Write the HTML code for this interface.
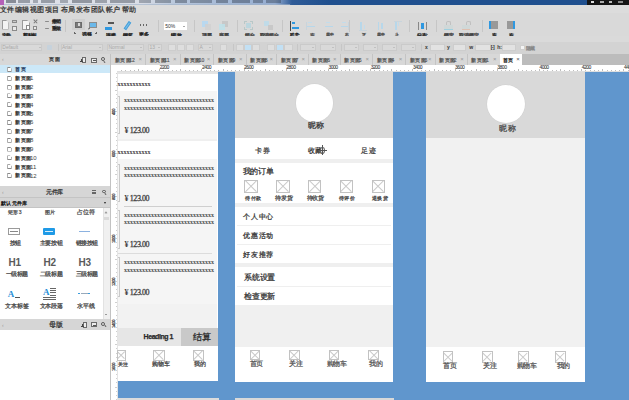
<!DOCTYPE html>
<html><head><meta charset="utf-8">
<title>Axure RP 9 - 原型设计</title>
<style>
*{margin:0;padding:0;box-sizing:border-box}
html,body{width:629px;height:400px;overflow:hidden;background:#d9d9d9;font-family:"Liberation Sans",sans-serif;color:#333}
.a{position:absolute}
.t{position:absolute;white-space:nowrap;line-height:1}
.cj{-webkit-text-stroke:0.25px currentColor}
.ph{position:absolute;border:0.8px solid #c2c2c2;background:#fff;overflow:hidden}
.ph:before,.ph:after{content:"";position:absolute;left:50%;top:50%;width:141%;height:0.7px;background:#cacaca;transform:translate(-50%,-50%) rotate(45deg)}
.ph:after{transform:translate(-50%,-50%) rotate(-45deg)}
</style></head><body>

<div class="a" style="left:0px;top:0px;width:629px;height:4.5px;background:linear-gradient(90deg,#dfe2e9 0,#d9dde6 140px,#b8c7dc 175px,#a3b8d6 230px,#94acd0 275px,#2f5b97 292px,#1f4f8e 330px,#1f4f8e 100%)"></div>
<div class="a" style="left:0px;top:3.6px;width:290px;height:0.9px;background:#9fb0c8;opacity:.6"></div>
<div class="a" style="left:0px;top:0px;width:3.5px;height:4.5px;background:#b560b8"></div>
<div class="a" style="left:6px;top:0.4px;width:10px;height:2.8px;background:#1c2432;opacity:0.45"></div>
<div class="a" style="left:18px;top:0.4px;width:12px;height:2.8px;background:#1c2432;opacity:0.36"></div>
<div class="a" style="left:33px;top:0.4px;width:5px;height:2.8px;background:#1c2432;opacity:0.30"></div>
<div class="a" style="left:41px;top:0.4px;width:14px;height:2.8px;background:#1c2432;opacity:0.36"></div>
<div class="a" style="left:60px;top:0.4px;width:8px;height:2.8px;background:#1c2432;opacity:0.30"></div>
<div class="a" style="left:72px;top:0.4px;width:20px;height:2.8px;background:#1c2432;opacity:0.39"></div>
<div class="a" style="left:95px;top:0.4px;width:12px;height:2.8px;background:#1c2432;opacity:0.33"></div>
<div class="a" style="left:110px;top:0.4px;width:25px;height:2.8px;background:#1c2432;opacity:0.36"></div>
<div class="a" style="left:139px;top:0.4px;width:12px;height:2.8px;background:#1c2432;opacity:0.30"></div>
<div class="a" style="left:155px;top:0.4px;width:16px;height:2.8px;background:#1c2432;opacity:0.33"></div>
<div class="a" style="left:175px;top:0.4px;width:12px;height:2.8px;background:#1c2432;opacity:0.36"></div>
<div class="a" style="left:190px;top:0.4px;width:22px;height:2.8px;background:#1c2432;opacity:0.33"></div>
<div class="a" style="left:216px;top:0.4px;width:12px;height:2.8px;background:#1c2432;opacity:0.36"></div>
<div class="a" style="left:232px;top:0.4px;width:18px;height:2.8px;background:#1c2432;opacity:0.36"></div>
<div class="a" style="left:253px;top:0.4px;width:10px;height:2.8px;background:#1c2432;opacity:0.33"></div>
<div class="a" style="left:266px;top:0.4px;width:15px;height:2.8px;background:#1c2432;opacity:0.33"></div>
<div class="a" style="left:587px;top:0px;width:42px;height:4.5px;background:#151515"></div>
<div class="a" style="left:591px;top:1px;width:3px;height:2px;background:#ddd"></div>
<div class="a" style="left:600px;top:1px;width:4px;height:2px;background:#aaa"></div>
<div class="a" style="left:609px;top:1px;width:3px;height:2px;background:#bbb"></div>
<div class="a" style="left:618px;top:1px;width:5px;height:2px;background:#888"></div>
<div class="a" style="left:0px;top:4.5px;width:629px;height:8.5px;background:#dcdcdc"></div>
<div class="t cj" style="left:0px;top:5.7px;font-size:7px;letter-spacing:-0.15px;color:#333;">文件</div>
<div class="t cj" style="left:15px;top:5.7px;font-size:7px;letter-spacing:0.2px;color:#333;">编辑</div>
<div class="t cj" style="left:30px;top:5.7px;font-size:7px;letter-spacing:0.35px;color:#333;">视图</div>
<div class="t cj" style="left:45px;top:5.7px;font-size:7px;letter-spacing:0.25px;color:#333;">项目</div>
<div class="t cj" style="left:60.5px;top:5.7px;font-size:7px;letter-spacing:0.1px;color:#333;">布局</div>
<div class="t cj" style="left:75.8px;top:5.7px;font-size:7px;letter-spacing:0.1px;color:#333;">发布</div>
<div class="t cj" style="left:90.6px;top:5.7px;font-size:7px;letter-spacing:0.2px;color:#333;">团队</div>
<div class="t cj" style="left:106px;top:5.7px;font-size:7px;letter-spacing:0.25px;color:#333;">帐户</div>
<div class="t cj" style="left:121.6px;top:5.7px;font-size:7px;letter-spacing:0.1px;color:#333;">帮助</div>
<div class="a" style="left:0px;top:13px;width:629px;height:27px;background:#d9d9d9"></div>
<div class="a" style="left:65.3px;top:20px;width:0.8px;height:12px;background:#c6c6c6"></div>
<div class="a" style="left:158.3px;top:20px;width:0.8px;height:12px;background:#c6c6c6"></div>
<div class="a" style="left:193.9px;top:20px;width:0.8px;height:12px;background:#c6c6c6"></div>
<div class="a" style="left:237px;top:20px;width:0.8px;height:12px;background:#c6c6c6"></div>
<div class="a" style="left:281.5px;top:20px;width:0.8px;height:12px;background:#c6c6c6"></div>
<div class="a" style="left:349px;top:20px;width:0.8px;height:12px;background:#c6c6c6"></div>
<div class="a" style="left:409.4px;top:20px;width:0.8px;height:12px;background:#c6c6c6"></div>
<div class="a" style="left:435.9px;top:20px;width:0.8px;height:12px;background:#c6c6c6"></div>
<div class="a" style="left:481.5px;top:20px;width:0.8px;height:12px;background:#c6c6c6"></div>
<div class="a" style="left:1.8px;top:20px;width:6.8px;height:9.5px;border:1px solid #9a9a9a;background:#f4f4f4;clip-path:polygon(0 0,65% 0,100% 30%,100% 100%,0 100%)"></div>
<div class="a" style="left:11.5px;top:19.6px;width:5px;height:3.5px;border:1px solid #8a8a8a;background:#c8c8c8"></div>
<div class="a" style="left:11.5px;top:26px;width:5.5px;height:4.5px;border:1px solid #8a8a8a;background:#e8e8e8"></div>
<div class="a" style="left:1.6px;top:32.7px;width:7.4px;height:3.6px;background:#1a1a1a;opacity:.28"></div>
<div class="t cj" style="left:1.6px;top:32.5px;font-size:5px;letter-spacing:-0.3px;color:#1a1a1a;">文件</div>
<div class="a" style="left:22px;top:20px;width:8px;height:10px;border:1px solid #9a9a9a;background:#f4f4f4;clip-path:polygon(0 0,65% 0,100% 30%,100% 100%,0 100%)"></div>
<div class="a" style="left:26px;top:25px;width:4px;height:5px;border:1px solid #8a8a8a;background:#fff"></div>
<div class="a" style="left:33px;top:21.2px;width:5px;height:0.9px;background:#777;transform:rotate(45deg)"></div>
<div class="a" style="left:33px;top:21.2px;width:5px;height:0.9px;background:#777;transform:rotate(-45deg)"></div>
<div class="a" style="left:32.6px;top:25.6px;width:4.8px;height:4.9px;border:1px solid #8a8a8a;background:#e8e8e8"></div>
<div class="a" style="left:23px;top:32.7px;width:11px;height:3.6px;background:#1a1a1a;opacity:.28"></div>
<div class="t cj" style="left:23px;top:32.5px;font-size:5px;letter-spacing:-0.33px;color:#1a1a1a;">剪贴板</div>
<div class="a" style="left:44.8px;top:20.5px;width:4.2px;height:1.3px;background:#8a8a8a;border-radius:1px"></div>
<div class="a" style="left:44.8px;top:27.7px;width:4.2px;height:1.3px;background:#8a8a8a;border-radius:1px"></div>
<div class="a" style="left:51.5px;top:19.5px;width:7.5px;height:3.5px;background:#222;opacity:.28"></div>
<div class="t cj" style="left:51.5px;top:19.25px;font-size:5px;letter-spacing:-0.25px;color:#222;">撤销</div>
<div class="a" style="left:51.5px;top:26.5px;width:7.5px;height:3.5px;background:#222;opacity:.28"></div>
<div class="t cj" style="left:51.5px;top:26.25px;font-size:5px;letter-spacing:-0.25px;color:#222;">重做</div>
<div class="a" style="left:72px;top:19.2px;width:13px;height:10.5px;background:#cfcfcf"></div>
<div class="a" style="left:75px;top:21.6px;width:7px;height:6.3px;background:#7a7a7a;border:1px solid #6a6a6a"></div>
<div class="a" style="left:77.6px;top:22.8px;width:2px;height:3.6px;background:#d8d8d8"></div>
<div class="a" style="left:89px;top:21.6px;width:7.8px;height:6.8px;border:1px solid #8c8c8c;background:#6ab8ea"></div>
<div class="a" style="left:88.2px;top:27.6px;width:2.2px;height:0.9px;background:#555;transform:rotate(-45deg)"></div>
<div class="a" style="left:73.5px;top:32px;width:2.5px;height:2px;border-left:1px solid #666;border-bottom:1px solid #666"></div>
<div class="a" style="left:94.5px;top:32px;width:2.5px;height:2px;border-right:1px solid #666;border-bottom:1px solid #666"></div>
<div class="a" style="left:82px;top:31.8px;width:7px;height:3.7px;background:#1a1a1a;opacity:.28"></div>
<div class="t cj" style="left:82px;top:31.65px;font-size:5px;letter-spacing:-0.5px;color:#1a1a1a;">选择</div>
<div class="a" style="left:108px;top:21.6px;width:6px;height:2px;background:#555"></div>
<div class="a" style="left:105px;top:27.2px;width:6.5px;height:2.8px;background:#2f98e0"></div>
<div class="a" style="left:106px;top:32.7px;width:7.5px;height:3.6px;background:#1a1a1a;opacity:.28"></div>
<div class="t cj" style="left:106px;top:32.5px;font-size:5px;letter-spacing:-0.25px;color:#1a1a1a;">连接</div>
<div class="a" style="left:125.5px;top:21px;width:2.6px;height:9px;background:#7cc3ec;transform:rotate(35deg);border:0.5px solid #4a9fd8"></div>
<div class="a" style="left:123px;top:32.7px;width:8px;height:3.6px;background:#1a1a1a;opacity:.28"></div>
<div class="t cj" style="left:123px;top:32.5px;font-size:5px;letter-spacing:0px;color:#1a1a1a;">钢笔</div>
<div class="a" style="left:139.5px;top:24.3px;width:1.8px;height:1.6px;background:#666"></div>
<div class="a" style="left:142.6px;top:24.3px;width:1.8px;height:1.6px;background:#666"></div>
<div class="a" style="left:145.7px;top:24.3px;width:1.8px;height:1.6px;background:#666"></div>
<div class="a" style="left:139px;top:32.5px;width:7px;height:3.7px;background:#1a1a1a;opacity:.28"></div>
<div class="t cj" style="left:139px;top:32.35px;font-size:5px;letter-spacing:-0.5px;color:#1a1a1a;">更多</div>
<div class="a" style="left:146.8px;top:34.2px;width:0;height:0;border-left:1.1px solid transparent;border-right:1.1px solid transparent;border-top:1.5px solid #333"></div>
<div class="a" style="left:164px;top:21.9px;width:23px;height:8.4px;background:#fff"></div>
<div class="t" style="left:165.2px;top:24.2px;font-size:5px;color:#333;">50%</div>
<div class="a" style="left:183.2px;top:25.6px;width:0;height:0;border-left:1.2px solid transparent;border-right:1.2px solid transparent;border-top:1.5px solid #555"></div>
<div class="a" style="left:171px;top:33px;width:9px;height:3.5px;background:#1a1a1a;opacity:.28"></div>
<div class="t cj" style="left:171px;top:32.75px;font-size:5px;letter-spacing:0.5px;color:#1a1a1a;">缩放</div>
<div class="a" style="left:202px;top:21px;width:6px;height:5.5px;background:#b9d8ef"></div>
<div class="a" style="left:205px;top:24px;width:6px;height:5.5px;background:#d0d0d0;opacity:.9"></div>
<div class="a" style="left:202px;top:32.7px;width:8px;height:3.6px;background:#3a3a3a;opacity:.28"></div>
<div class="t cj" style="left:202px;top:32.5px;font-size:5px;letter-spacing:0px;color:#3a3a3a;">顶层</div>
<div class="a" style="left:222px;top:21px;width:6px;height:5.5px;background:#c8c8c8"></div>
<div class="a" style="left:219px;top:24px;width:6px;height:5.5px;background:#bfe0e8;opacity:.9"></div>
<div class="a" style="left:219px;top:32.7px;width:8px;height:3.6px;background:#3a3a3a;opacity:.28"></div>
<div class="t cj" style="left:219px;top:32.5px;font-size:5px;letter-spacing:0px;color:#3a3a3a;">底层</div>
<div class="a" style="left:244px;top:20.5px;width:9px;height:9px;border:1px dashed #b8c8c8"></div>
<div class="a" style="left:246px;top:22.5px;width:5px;height:5px;background:#bcd6de"></div>
<div class="a" style="left:245px;top:32.7px;width:7px;height:3.6px;background:#3a3a3a;opacity:.28"></div>
<div class="t cj" style="left:245px;top:32.5px;font-size:5px;letter-spacing:-0.5px;color:#3a3a3a;">组合</div>
<div class="a" style="left:264px;top:21px;width:5px;height:5px;background:#c0dbe8"></div>
<div class="a" style="left:268px;top:24.5px;width:5px;height:5px;background:#c8c8c8"></div>
<div class="a" style="left:259.5px;top:32.7px;width:15.5px;height:3.6px;background:#3a3a3a;opacity:.28"></div>
<div class="t cj" style="left:259.5px;top:32.5px;font-size:5px;letter-spacing:-0.12px;color:#3a3a3a;">取消组合</div>
<div class="a" style="left:290px;top:21px;width:0.9px;height:10px;background:#444"></div>
<div class="a" style="left:292.2px;top:22px;width:2.8px;height:1.8px;background:#2f98e0"></div>
<div class="a" style="left:292.2px;top:26.5px;width:6.5px;height:2px;background:#2f98e0"></div>
<div class="a" style="left:290px;top:33px;width:7px;height:3.3px;background:#1a1a1a;opacity:.28"></div>
<div class="t cj" style="left:290px;top:33.15px;font-size:4px;letter-spacing:0.5px;color:#1a1a1a;">对齐</div>
<div class="a" style="left:297.6px;top:34.3px;width:0;height:0;border-left:1.1px solid transparent;border-right:1.1px solid transparent;border-top:1.5px solid #333"></div>
<div class="a" style="left:307px;top:25.5px;width:8px;height:1.8px;background:#b7d7ea"></div>
<div class="a" style="left:308px;top:22px;width:4px;height:1.2px;background:#c2dceb"></div>
<div class="a" style="left:325px;top:25.5px;width:8px;height:1.8px;background:#b7d7ea"></div>
<div class="a" style="left:326px;top:22px;width:4px;height:1.2px;background:#c2dceb"></div>
<div class="a" style="left:341px;top:25.5px;width:8px;height:1.8px;background:#b7d7ea"></div>
<div class="a" style="left:342px;top:22px;width:4px;height:1.2px;background:#c2dceb"></div>
<div class="a" style="left:305.5px;top:21.5px;width:0.7px;height:8px;background:#c8d4dc"></div>
<div class="a" style="left:348.2px;top:21.5px;width:0.7px;height:8px;background:#c8d4dc"></div>
<div class="a" style="left:360px;top:21.5px;width:1.8px;height:8px;background:#b7d7ea"></div>
<div class="a" style="left:363.5px;top:25px;width:1.2px;height:4px;background:#c2dceb"></div>
<div class="a" style="left:358.5px;top:29.6px;width:8px;height:0.7px;background:#c8d4dc"></div>
<div class="a" style="left:377.5px;top:21.5px;width:1.8px;height:8px;background:#b7d7ea"></div>
<div class="a" style="left:381px;top:22.5px;width:1.8px;height:6px;background:#b7d7ea"></div>
<div class="a" style="left:395px;top:21.5px;width:1.8px;height:8px;background:#b7d7ea"></div>
<div class="a" style="left:398.2px;top:21.5px;width:1.2px;height:4px;background:#c2dceb"></div>
<div class="a" style="left:393.5px;top:21px;width:8px;height:0.7px;background:#c8d4dc"></div>
<div class="a" style="left:310px;top:33px;width:4px;height:3.3px;background:#4a4a4a;opacity:.28"></div>
<div class="t cj" style="left:310px;top:32.65px;font-size:5px;letter-spacing:0px;color:#4a4a4a;">左</div>
<div class="a" style="left:326px;top:33px;width:6px;height:3.3px;background:#4a4a4a;opacity:.28"></div>
<div class="t cj" style="left:326px;top:33.15px;font-size:4px;letter-spacing:0px;color:#4a4a4a;">居中</div>
<div class="a" style="left:344.5px;top:33px;width:3.5px;height:3.3px;background:#4a4a4a;opacity:.28"></div>
<div class="t cj" style="left:344.5px;top:33.15px;font-size:4px;letter-spacing:0.5px;color:#4a4a4a;">右</div>
<div class="a" style="left:361.5px;top:33px;width:3.5px;height:3.3px;background:#4a4a4a;opacity:.28"></div>
<div class="t cj" style="left:361.5px;top:33.15px;font-size:4px;letter-spacing:0.5px;color:#4a4a4a;">下</div>
<div class="a" style="left:376.5px;top:33px;width:7px;height:3.3px;background:#4a4a4a;opacity:.28"></div>
<div class="t cj" style="left:376.5px;top:33.15px;font-size:4px;letter-spacing:0.5px;color:#4a4a4a;">居中</div>
<div class="a" style="left:394.5px;top:33px;width:3.5px;height:3.3px;background:#4a4a4a;opacity:.28"></div>
<div class="t cj" style="left:394.5px;top:33.15px;font-size:4px;letter-spacing:0.5px;color:#4a4a4a;">上</div>
<div class="a" style="left:418px;top:21.6px;width:1px;height:8px;background:#888"></div>
<div class="a" style="left:426px;top:21.6px;width:1px;height:8px;background:#888"></div>
<div class="a" style="left:420.5px;top:22.5px;width:3px;height:6.5px;background:#2f98e0"></div>
<div class="a" style="left:417px;top:33px;width:8px;height:3.3px;background:#1a1a1a;opacity:.28"></div>
<div class="t cj" style="left:417px;top:32.65px;font-size:5px;letter-spacing:0px;color:#1a1a1a;">分布</div>
<div class="a" style="left:425.6px;top:34.3px;width:0;height:0;border-left:1.1px solid transparent;border-right:1.1px solid transparent;border-top:1.5px solid #333"></div>
<div class="a" style="left:445.5px;top:21px;width:5px;height:4px;border:1px solid #c0c0c0;border-bottom:none;border-radius:2px 2px 0 0"></div>
<div class="a" style="left:444px;top:25px;width:8.5px;height:4.5px;background:#d0d8d8;border-bottom:1px solid #9fd0e0"></div>
<div class="a" style="left:444px;top:32.7px;width:8px;height:3.6px;background:#3a3a3a;opacity:.28"></div>
<div class="t cj" style="left:444px;top:32.5px;font-size:5px;letter-spacing:0px;color:#3a3a3a;">锁定</div>
<div class="a" style="left:466px;top:20.5px;width:4.5px;height:4px;border:1px solid #c0c0c0;border-bottom:none;border-radius:2px 2px 0 0"></div>
<div class="a" style="left:462px;top:25px;width:8px;height:4.5px;background:#d0d8d8;border-bottom:1px solid #e0c0b0"></div>
<div class="a" style="left:458.5px;top:32.7px;width:16px;height:3.6px;background:#3a3a3a;opacity:.28"></div>
<div class="t cj" style="left:458.5px;top:32.5px;font-size:5px;letter-spacing:0px;color:#3a3a3a;">取消锁定</div>
<div class="a" style="left:489px;top:21.2px;width:9px;height:8.1px;background:#999;border-left:2px solid #2f98e0"></div>
<div class="a" style="left:506.5px;top:21.2px;width:8.5px;height:8.1px;background:#999;border-right:2px solid #2f98e0"></div>
<div class="a" style="left:491.5px;top:32.7px;width:4px;height:3.6px;background:#1a1a1a;opacity:.28"></div>
<div class="t cj" style="left:491.5px;top:32.5px;font-size:5px;letter-spacing:0px;color:#1a1a1a;">左</div>
<div class="a" style="left:508.5px;top:32.7px;width:4px;height:3.6px;background:#1a1a1a;opacity:.28"></div>
<div class="t cj" style="left:508.5px;top:32.5px;font-size:5px;letter-spacing:0px;color:#1a1a1a;">右</div>
<div class="a" style="left:0px;top:36px;width:629px;height:6px;background:#dadada"></div>
<div class="a" style="left:0px;top:42px;width:629px;height:12.5px;background:#d3d3d3"></div>
<div class="a" style="left:0.8px;top:43.8px;width:41.7px;height:7.5px;background:#d9d9d9;border:0.8px solid #cacaca"></div>
<div class="t" style="left:2.3px;top:45.3px;font-size:5px;color:#a8a8a8;">Default</div>
<div class="a" style="left:38.5px;top:47px;width:0;height:0;border-left:1.2px solid transparent;border-right:1.2px solid transparent;border-top:1.5px solid #a8a8a8"></div>
<div class="a" style="left:46.5px;top:44.5px;width:5.5px;height:5.5px;background:#c6d2dc;border-radius:1px"></div>
<div class="a" style="left:57.5px;top:44px;width:0.7px;height:7px;background:#c6c6c6"></div>
<div class="a" style="left:60.5px;top:43.8px;width:42.5px;height:7.5px;background:#d9d9d9;border:0.8px solid #cacaca"></div>
<div class="t" style="left:62px;top:45.3px;font-size:5px;color:#a8a8a8;">Arial</div>
<div class="a" style="left:99px;top:47px;width:0;height:0;border-left:1.2px solid transparent;border-right:1.2px solid transparent;border-top:1.5px solid #a8a8a8"></div>
<div class="a" style="left:107px;top:43.8px;width:37px;height:7.5px;background:#d9d9d9;border:0.8px solid #cacaca"></div>
<div class="t" style="left:108.5px;top:45.3px;font-size:5px;color:#a8a8a8;">Normal</div>
<div class="a" style="left:140px;top:47px;width:0;height:0;border-left:1.2px solid transparent;border-right:1.2px solid transparent;border-top:1.5px solid #a8a8a8"></div>
<div class="a" style="left:148px;top:43.8px;width:14px;height:7.5px;background:#d9d9d9;border:0.8px solid #cacaca"></div>
<div class="t" style="left:149.5px;top:45.3px;font-size:5px;color:#a8a8a8;">13</div>
<div class="a" style="left:158px;top:47px;width:0;height:0;border-left:1.2px solid transparent;border-right:1.2px solid transparent;border-top:1.5px solid #a8a8a8"></div>
<div class="a" style="left:167.6px;top:43.6px;width:8.8px;height:7.8px;background:#dedede;border:0.8px solid #cdcdcd"></div>
<div class="a" style="left:176.6px;top:43.6px;width:8.8px;height:7.8px;background:#dedede;border:0.8px solid #cdcdcd"></div>
<div class="a" style="left:185.6px;top:43.6px;width:8.8px;height:7.8px;background:#dedede;border:0.8px solid #cdcdcd"></div>
<div class="a" style="left:198px;top:43.8px;width:15px;height:7.5px;background:#d9d9d9;border:0.8px solid #cacaca"></div>
<div class="t" style="left:199.5px;top:45.3px;font-size:5px;color:#a8a8a8;">A</div>
<div class="a" style="left:209px;top:47px;width:0;height:0;border-left:1.2px solid transparent;border-right:1.2px solid transparent;border-top:1.5px solid #a8a8a8"></div>
<div class="a" style="left:220px;top:43.6px;width:7px;height:7.8px;background:#dedede;border:0.8px solid #cdcdcd"></div>
<div class="a" style="left:233px;top:44px;width:0.7px;height:7px;background:#c6c6c6"></div>
<div class="a" style="left:236px;top:43.6px;width:8.4px;height:7.8px;background:#dedede;border:0.8px solid #cdcdcd"></div>
<div class="a" style="left:244px;top:43.6px;width:8.4px;height:7.8px;background:#c2e0f4;border:0.8px solid #cdcdcd"></div>
<div class="a" style="left:252px;top:43.6px;width:8.4px;height:7.8px;background:#dedede;border:0.8px solid #cdcdcd"></div>
<div class="a" style="left:266.5px;top:43.6px;width:8.6px;height:7.8px;background:#dedede;border:0.8px solid #cdcdcd"></div>
<div class="a" style="left:275.7px;top:43.6px;width:8.6px;height:7.8px;background:#c2e0f4;border:0.8px solid #cdcdcd"></div>
<div class="a" style="left:284.3px;top:43.6px;width:8.6px;height:7.8px;background:#dedede;border:0.8px solid #cdcdcd"></div>
<div class="a" style="left:296.7px;top:44px;width:0.7px;height:7px;background:#c6c6c6"></div>
<div class="a" style="left:300px;top:43.8px;width:16px;height:7.5px;background:#d9d9d9;border:0.8px solid #cacaca"></div>
<div class="a" style="left:312px;top:47px;width:0;height:0;border-left:1.2px solid transparent;border-right:1.2px solid transparent;border-top:1.5px solid #a8a8a8"></div>
<div class="a" style="left:320px;top:43.8px;width:16px;height:7.5px;background:#d9d9d9;border:0.8px solid #cacaca"></div>
<div class="a" style="left:332px;top:47px;width:0;height:0;border-left:1.2px solid transparent;border-right:1.2px solid transparent;border-top:1.5px solid #a8a8a8"></div>
<div class="a" style="left:340.6px;top:44px;width:0.7px;height:7px;background:#c6c6c6"></div>
<div class="a" style="left:344px;top:43.8px;width:14.5px;height:7.5px;background:#d9d9d9;border:0.8px solid #cacaca"></div>
<div class="a" style="left:354.5px;top:47px;width:0;height:0;border-left:1.2px solid transparent;border-right:1.2px solid transparent;border-top:1.5px solid #a8a8a8"></div>
<div class="a" style="left:363px;top:43.8px;width:15px;height:7.5px;background:#d9d9d9;border:0.8px solid #cacaca"></div>
<div class="a" style="left:374px;top:47px;width:0;height:0;border-left:1.2px solid transparent;border-right:1.2px solid transparent;border-top:1.5px solid #a8a8a8"></div>
<div class="a" style="left:382px;top:43.8px;width:15px;height:7.5px;background:#d9d9d9;border:0.8px solid #cacaca"></div>
<div class="a" style="left:393px;top:47px;width:0;height:0;border-left:1.2px solid transparent;border-right:1.2px solid transparent;border-top:1.5px solid #a8a8a8"></div>
<div class="a" style="left:401px;top:43.8px;width:15px;height:7.5px;background:#d9d9d9;border:0.8px solid #cacaca"></div>
<div class="a" style="left:412px;top:47px;width:0;height:0;border-left:1.2px solid transparent;border-right:1.2px solid transparent;border-top:1.5px solid #a8a8a8"></div>
<div class="a" style="left:421px;top:44px;width:0.7px;height:7px;background:#c6c6c6"></div>
<div class="t" style="left:425px;top:45.2px;font-size:5px;color:#333;font-weight:bold">x</div>
<div class="a" style="left:429.5px;top:43.6px;width:15.5px;height:7.8px;background:#e2e2e2;border:0.8px solid #cdcdcd"></div>
<div class="t" style="left:447px;top:45.2px;font-size:5px;color:#333;font-weight:bold">y</div>
<div class="a" style="left:452.5px;top:43.6px;width:13.5px;height:7.8px;background:#e2e2e2;border:0.8px solid #cdcdcd"></div>
<div class="t" style="left:469.3px;top:45.2px;font-size:5px;color:#333;font-weight:bold">w</div>
<div class="a" style="left:475px;top:43.6px;width:16px;height:7.8px;background:#e2e2e2;border:0.8px solid #cdcdcd"></div>
<div class="t" style="left:490.8px;top:45px;font-size:5px;color:#333;font-weight:bold;letter-spacing:-0.6px">[-]</div>
<div class="t" style="left:497.2px;top:45.2px;font-size:5px;color:#333;font-weight:bold">h:</div>
<div class="a" style="left:501.5px;top:43.6px;width:14px;height:7.8px;background:#e2e2e2;border:0.8px solid #cdcdcd"></div>
<div class="a" style="left:519.5px;top:45.2px;width:5.2px;height:5.2px;background:#f4f4f4;border:0.6px solid #cfcfcf"></div>
<div class="t cj" style="left:525.5px;top:46px;font-size:5px;letter-spacing:-0.75px;color:#888;">隐藏</div>
<div class="a" style="left:0px;top:54.4px;width:110.5px;height:345.6px;background:#fff"></div>
<div class="a" style="left:110.2px;top:54.4px;width:0.9px;height:345.6px;background:#c2c2c2"></div>
<div class="a" style="left:0px;top:54.4px;width:110.2px;height:10.2px;background:#d8d8d8"></div>
<div class="t" style="left:2px;top:57px;font-size:5px;color:#999;">‹</div>
<div class="t cj" style="left:49px;top:57.4px;font-size:5px;letter-spacing:0.5px;color:#333;">页面</div>
<div class="a" style="left:81.6px;top:57.4px;width:4.6px;height:5.2px;border:0.7px solid #6a6a6a;background:#ececec"></div>
<div class="a" style="left:80.2px;top:60.6px;width:3px;height:0.7px;background:#444"></div>
<div class="a" style="left:81.35px;top:59.45px;width:0.7px;height:3px;background:#444"></div>
<div class="a" style="left:91.2px;top:57.6px;width:6.2px;height:5px;border:0.7px solid #6a6a6a;background:#ececec"></div>
<div class="a" style="left:92.6px;top:59.8px;width:3px;height:0.7px;background:#555"></div>
<div class="a" style="left:101.2px;top:57.4px;width:3.8px;height:3.8px;border:0.9px solid #555;border-radius:50%"></div>
<div class="a" style="left:104.3px;top:60.6px;width:0.9px;height:2.2px;background:#555;transform:rotate(-45deg)"></div>
<div class="a" style="left:0px;top:64.6px;width:110.2px;height:8.7px;background:#cce8f8"></div>
<div class="a" style="left:7.3px;top:66.9px;width:4.3px;height:5px;border:0.8px solid #8a8a8a;background:#fff;clip-path:polygon(0 0,60% 0,100% 35%,100% 100%,0 100%)"></div>
<div class="t cj" style="left:15px;top:67.15px;font-size:5px;letter-spacing:0.5px;color:#1f3a60;">首页</div>
<div class="a" style="left:7.3px;top:75.75px;width:4.3px;height:5px;border:0.8px solid #8a8a8a;background:#fff;clip-path:polygon(0 0,60% 0,100% 35%,100% 100%,0 100%)"></div>
<div class="t cj" style="left:15px;top:76px;font-size:5px;letter-spacing:0.5px;color:#333;">新页面</div>
<div class="t" style="left:30px;top:75.15px;font-size:6px;color:#444;">1</div>
<div class="a" style="left:7.3px;top:84.6px;width:4.3px;height:5px;border:0.8px solid #8a8a8a;background:#fff;clip-path:polygon(0 0,60% 0,100% 35%,100% 100%,0 100%)"></div>
<div class="t cj" style="left:15px;top:84.85px;font-size:5px;letter-spacing:0.5px;color:#333;">新页面</div>
<div class="t" style="left:30px;top:84px;font-size:6px;color:#444;">2</div>
<div class="a" style="left:7.3px;top:93.45px;width:4.3px;height:5px;border:0.8px solid #8a8a8a;background:#fff;clip-path:polygon(0 0,60% 0,100% 35%,100% 100%,0 100%)"></div>
<div class="t cj" style="left:15px;top:93.7px;font-size:5px;letter-spacing:0.5px;color:#333;">新页面</div>
<div class="t" style="left:30px;top:92.85px;font-size:6px;color:#444;">3</div>
<div class="a" style="left:7.3px;top:102.3px;width:4.3px;height:5px;border:0.8px solid #8a8a8a;background:#fff;clip-path:polygon(0 0,60% 0,100% 35%,100% 100%,0 100%)"></div>
<div class="t cj" style="left:15px;top:102.55px;font-size:5px;letter-spacing:0.5px;color:#333;">新页面</div>
<div class="t" style="left:30px;top:101.7px;font-size:6px;color:#444;">4</div>
<div class="a" style="left:7.3px;top:111.15px;width:4.3px;height:5px;border:0.8px solid #8a8a8a;background:#fff;clip-path:polygon(0 0,60% 0,100% 35%,100% 100%,0 100%)"></div>
<div class="t cj" style="left:15px;top:111.4px;font-size:5px;letter-spacing:0.5px;color:#333;">新页面</div>
<div class="t" style="left:30px;top:110.55px;font-size:6px;color:#444;">5</div>
<div class="a" style="left:7.3px;top:120px;width:4.3px;height:5px;border:0.8px solid #8a8a8a;background:#fff;clip-path:polygon(0 0,60% 0,100% 35%,100% 100%,0 100%)"></div>
<div class="t cj" style="left:15px;top:120.25px;font-size:5px;letter-spacing:0.5px;color:#333;">新页面</div>
<div class="t" style="left:30px;top:119.4px;font-size:6px;color:#444;">6</div>
<div class="a" style="left:7.3px;top:128.85px;width:4.3px;height:5px;border:0.8px solid #8a8a8a;background:#fff;clip-path:polygon(0 0,60% 0,100% 35%,100% 100%,0 100%)"></div>
<div class="t cj" style="left:15px;top:129.1px;font-size:5px;letter-spacing:0.5px;color:#333;">新页面</div>
<div class="t" style="left:30px;top:128.25px;font-size:6px;color:#444;">7</div>
<div class="a" style="left:7.3px;top:137.7px;width:4.3px;height:5px;border:0.8px solid #8a8a8a;background:#fff;clip-path:polygon(0 0,60% 0,100% 35%,100% 100%,0 100%)"></div>
<div class="t cj" style="left:15px;top:137.95px;font-size:5px;letter-spacing:0.5px;color:#333;">新页面</div>
<div class="t" style="left:30px;top:137.1px;font-size:6px;color:#444;">8</div>
<div class="a" style="left:7.3px;top:146.55px;width:4.3px;height:5px;border:0.8px solid #8a8a8a;background:#fff;clip-path:polygon(0 0,60% 0,100% 35%,100% 100%,0 100%)"></div>
<div class="t cj" style="left:15px;top:146.8px;font-size:5px;letter-spacing:0.5px;color:#333;">新页面</div>
<div class="t" style="left:30px;top:145.95px;font-size:6px;color:#444;">9</div>
<div class="a" style="left:7.3px;top:155.4px;width:4.3px;height:5px;border:0.8px solid #8a8a8a;background:#fff;clip-path:polygon(0 0,60% 0,100% 35%,100% 100%,0 100%)"></div>
<div class="t cj" style="left:15px;top:155.65px;font-size:5px;letter-spacing:0.5px;color:#333;">新页面</div>
<div class="t" style="left:30px;top:154.8px;font-size:6px;color:#444;">10</div>
<div class="a" style="left:7.3px;top:164.25px;width:4.3px;height:5px;border:0.8px solid #8a8a8a;background:#fff;clip-path:polygon(0 0,60% 0,100% 35%,100% 100%,0 100%)"></div>
<div class="t cj" style="left:15px;top:164.5px;font-size:5px;letter-spacing:0.5px;color:#333;">新页面</div>
<div class="t" style="left:30px;top:163.65px;font-size:6px;color:#444;">11</div>
<div class="a" style="left:7.3px;top:173.1px;width:4.3px;height:5px;border:0.8px solid #8a8a8a;background:#fff;clip-path:polygon(0 0,60% 0,100% 35%,100% 100%,0 100%)"></div>
<div class="t cj" style="left:15px;top:173.35px;font-size:5px;letter-spacing:0.5px;color:#333;">新页面</div>
<div class="t" style="left:30px;top:172.5px;font-size:6px;color:#444;">12</div>
<div class="a" style="left:0px;top:185.6px;width:110.2px;height:0.8px;background:#c6c6c6"></div>
<div class="a" style="left:0px;top:186.3px;width:110.2px;height:11.1px;background:#d6d6d6"></div>
<div class="t" style="left:2px;top:190px;font-size:5px;color:#999;">‹</div>
<div class="t cj" style="left:46px;top:189px;font-size:6px;letter-spacing:-0.33px;color:#333;">元件库</div>
<div class="a" style="left:92px;top:190px;width:4.2px;height:0.8px;background:#666"></div>
<div class="a" style="left:92px;top:191.6px;width:4.2px;height:0.8px;background:#666"></div>
<div class="a" style="left:92px;top:193.2px;width:4.2px;height:0.8px;background:#666"></div>
<div class="a" style="left:102px;top:189.6px;width:3.8px;height:3.8px;border:0.9px solid #555;border-radius:50%"></div>
<div class="a" style="left:105.1px;top:192.8px;width:0.9px;height:2.2px;background:#555;transform:rotate(-45deg)"></div>
<div class="a" style="left:0px;top:197.4px;width:110.2px;height:11px;background:#d4d4d4;border-top:0.6px solid #c4c4c4;border-bottom:0.6px solid #c4c4c4"></div>
<div class="t cj" style="left:1.2px;top:201.05px;font-size:5px;letter-spacing:0.16px;color:#111;">默认元件库</div>
<div class="a" style="left:103.6px;top:202.4px;width:0;height:0;border-left:1.5px solid transparent;border-right:1.5px solid transparent;border-top:2px solid #222"></div>
<div class="a" style="left:102.8px;top:208px;width:7.4px;height:110.5px;background:#f0f0f0;border-left:0.6px solid #e2e2e2"></div>
<div class="a" style="left:105.2px;top:212.2px;width:2px;height:2px;border-left:0.7px solid #999;border-top:0.7px solid #999;transform:rotate(45deg)"></div>
<div class="a" style="left:103.6px;top:216.8px;width:5.8px;height:3px;background:#dadada"></div>
<div class="a" style="left:104.8px;top:314.2px;width:0;height:0;border-left:1.2px solid transparent;border-right:1.2px solid transparent;border-top:1.6px solid #444"></div>
<div class="t cj" style="left:7.9px;top:209.95px;font-size:5px;letter-spacing:0.37px;color:#555;">矩形3</div>
<div class="t cj" style="left:44.6px;top:209.95px;font-size:5px;letter-spacing:0.35px;color:#555;">图片</div>
<div class="t cj" style="left:77px;top:208.95px;font-size:6px;letter-spacing:-0.07px;color:#555;">占位符</div>
<div class="a" style="left:8px;top:228.4px;width:11.8px;height:6.2px;border:0.5px solid #9a9a9a;background:#fff"></div>
<div class="a" style="left:9.8px;top:231.1px;width:8.2px;height:0.9px;background:#888"></div>
<div class="a" style="left:43px;top:228.4px;width:12px;height:6.3px;background:#1f9ae6;border-radius:1px"></div>
<div class="a" style="left:44.8px;top:231px;width:8.4px;height:1px;background:#d8eefc"></div>
<div class="a" style="left:78.8px;top:230.9px;width:10.8px;height:1px;background:#8cb2e0"></div>
<div class="t cj" style="left:9.5px;top:240px;font-size:6px;letter-spacing:-0.25px;color:#444;">按钮</div>
<div class="t cj" style="left:39.7px;top:240px;font-size:6px;letter-spacing:-0.23px;color:#444;">主要按钮</div>
<div class="t cj" style="left:75.5px;top:240px;font-size:6px;letter-spacing:-0.43px;color:#444;">链接按钮</div>
<div class="t" style="left:8.5px;top:258.2px;font-size:10px;color:#5a5a5a;font-weight:bold;letter-spacing:-0.2px">H1</div>
<div class="t" style="left:43.5px;top:258.2px;font-size:10px;color:#5a5a5a;font-weight:bold;letter-spacing:-0.2px">H2</div>
<div class="t" style="left:78.5px;top:258.2px;font-size:10px;color:#5a5a5a;font-weight:bold;letter-spacing:-0.2px">H3</div>
<div class="t cj" style="left:5.6px;top:271.15px;font-size:6px;letter-spacing:-0.45px;color:#444;">一级标题</div>
<div class="t cj" style="left:39.7px;top:271.15px;font-size:6px;letter-spacing:-0.23px;color:#444;">二级标题</div>
<div class="t cj" style="left:75.5px;top:271.15px;font-size:6px;letter-spacing:-0.43px;color:#444;">三级标题</div>
<div class="t" style="left:7.8px;top:290.3px;font-size:9px;color:#1f8fd8;font-weight:bold;font-family:'Liberation Serif',serif">A</div>
<div class="a" style="left:15px;top:297px;width:5px;height:0.9px;background:#555"></div>
<div class="t" style="left:43px;top:287.6px;font-size:9px;color:#1f8fd8;font-weight:bold;font-family:'Liberation Serif',serif">A</div>
<div class="a" style="left:50px;top:288px;width:5.5px;height:0.9px;background:#666"></div>
<div class="a" style="left:50px;top:290.2px;width:5.5px;height:0.9px;background:#666"></div>
<div class="a" style="left:50px;top:292.4px;width:5.5px;height:0.9px;background:#666"></div>
<div class="a" style="left:50px;top:294.6px;width:5.5px;height:0.9px;background:#666"></div>
<div class="a" style="left:43px;top:296.8px;width:12.5px;height:0.9px;background:#666"></div>
<div class="a" style="left:43px;top:299px;width:12.5px;height:0.9px;background:#666"></div>
<div class="a" style="left:78px;top:292.7px;width:1.7px;height:1.7px;background:#1f8fd8;border-radius:50%"></div>
<div class="a" style="left:88.4px;top:292.7px;width:1.7px;height:1.7px;background:#1f8fd8;border-radius:50%"></div>
<div class="a" style="left:80.5px;top:293.3px;width:7.5px;height:0.4px;background:#9ab"></div>
<div class="t cj" style="left:4.8px;top:303.1px;font-size:6px;letter-spacing:0.15px;color:#444;">文本标签</div>
<div class="t cj" style="left:39.7px;top:303.1px;font-size:6px;letter-spacing:-0.23px;color:#444;">文本段落</div>
<div class="t cj" style="left:77px;top:303.1px;font-size:6px;letter-spacing:0px;color:#444;">水平线</div>
<div class="a" style="left:0px;top:318.6px;width:110.2px;height:0.8px;background:#c6c6c6"></div>
<div class="a" style="left:0px;top:319.3px;width:110.2px;height:10.4px;background:#d6d6d6"></div>
<div class="t" style="left:2px;top:322.8px;font-size:5px;color:#999;">‹</div>
<div class="t cj" style="left:49px;top:321.15px;font-size:7px;letter-spacing:-0.5px;color:#333;">母版</div>
<div class="a" style="left:82.6px;top:322.4px;width:4.6px;height:5.2px;border:0.7px solid #6a6a6a;background:#ececec"></div>
<div class="a" style="left:81.2px;top:325.6px;width:3px;height:0.7px;background:#444"></div>
<div class="a" style="left:82.35px;top:324.45px;width:0.7px;height:3px;background:#444"></div>
<div class="a" style="left:91.2px;top:322.4px;width:6.2px;height:5px;border:0.7px solid #6a6a6a;background:#ececec"></div>
<div class="a" style="left:92.6px;top:324.6px;width:3px;height:0.7px;background:#555"></div>
<div class="a" style="left:101.4px;top:322.2px;width:3.8px;height:3.8px;border:0.9px solid #555;border-radius:50%"></div>
<div class="a" style="left:104.5px;top:325.4px;width:0.9px;height:2.2px;background:#555;transform:rotate(-45deg)"></div>
<div class="a" style="left:111px;top:54.4px;width:518px;height:10.4px;background:#d8d8d8"></div>
<div class="a" style="left:145px;top:54px;width:0.8px;height:10.8px;background:#c4c4c4"></div>
<div class="t cj" style="left:114.5px;top:57.55px;font-size:5px;letter-spacing:0.5px;color:#555;">新页面</div>
<div class="t" style="left:129.3px;top:58.2px;font-size:5px;color:#555;-webkit-text-stroke:0.15px #555">12</div>
<div class="t" style="left:138.5px;top:56.4px;font-size:6px;color:#999;">×</div>
<div class="a" style="left:179.5px;top:54px;width:0.8px;height:10.8px;background:#c4c4c4"></div>
<div class="t cj" style="left:149.5px;top:57.55px;font-size:5px;letter-spacing:0.5px;color:#555;">新页面</div>
<div class="t" style="left:164.3px;top:58.2px;font-size:5px;color:#555;-webkit-text-stroke:0.15px #555">11</div>
<div class="t" style="left:173px;top:56.4px;font-size:6px;color:#999;">×</div>
<div class="a" style="left:213.2px;top:54px;width:0.8px;height:10.8px;background:#c4c4c4"></div>
<div class="t cj" style="left:184px;top:57.55px;font-size:5px;letter-spacing:0.5px;color:#555;">新页面</div>
<div class="t" style="left:198.8px;top:58.2px;font-size:5px;color:#555;-webkit-text-stroke:0.15px #555">10</div>
<div class="t" style="left:206.7px;top:56.4px;font-size:6px;color:#999;">×</div>
<div class="a" style="left:245.5px;top:54px;width:0.8px;height:10.8px;background:#c4c4c4"></div>
<div class="t cj" style="left:217.7px;top:57.55px;font-size:5px;letter-spacing:0.5px;color:#555;">新页面</div>
<div class="t" style="left:232.5px;top:58.2px;font-size:5px;color:#555;-webkit-text-stroke:0.15px #555">9</div>
<div class="t" style="left:239px;top:56.4px;font-size:6px;color:#999;">×</div>
<div class="a" style="left:276.1px;top:54px;width:0.8px;height:10.8px;background:#c4c4c4"></div>
<div class="t cj" style="left:250px;top:57.55px;font-size:5px;letter-spacing:0.5px;color:#555;">新页面</div>
<div class="t" style="left:264.8px;top:58.2px;font-size:5px;color:#555;-webkit-text-stroke:0.15px #555">8</div>
<div class="t" style="left:269.6px;top:56.4px;font-size:6px;color:#999;">×</div>
<div class="a" style="left:307.9px;top:54px;width:0.8px;height:10.8px;background:#c4c4c4"></div>
<div class="t cj" style="left:280.6px;top:57.55px;font-size:5px;letter-spacing:0.5px;color:#555;">新页面</div>
<div class="t" style="left:295.4px;top:58.2px;font-size:5px;color:#555;-webkit-text-stroke:0.15px #555">7</div>
<div class="t" style="left:301.4px;top:56.4px;font-size:6px;color:#999;">×</div>
<div class="a" style="left:339.5px;top:54px;width:0.8px;height:10.8px;background:#c4c4c4"></div>
<div class="t cj" style="left:312.4px;top:57.55px;font-size:5px;letter-spacing:0.5px;color:#555;">新页面</div>
<div class="t" style="left:327.2px;top:58.2px;font-size:5px;color:#555;-webkit-text-stroke:0.15px #555">6</div>
<div class="t" style="left:333px;top:56.4px;font-size:6px;color:#999;">×</div>
<div class="a" style="left:372.1px;top:54px;width:0.8px;height:10.8px;background:#c4c4c4"></div>
<div class="t cj" style="left:344px;top:57.55px;font-size:5px;letter-spacing:0.5px;color:#555;">新页面</div>
<div class="t" style="left:358.8px;top:58.2px;font-size:5px;color:#555;-webkit-text-stroke:0.15px #555">5</div>
<div class="t" style="left:365.6px;top:56.4px;font-size:6px;color:#999;">×</div>
<div class="a" style="left:405.2px;top:54px;width:0.8px;height:10.8px;background:#c4c4c4"></div>
<div class="t cj" style="left:376.6px;top:57.55px;font-size:5px;letter-spacing:0.5px;color:#555;">新页面</div>
<div class="t" style="left:391.4px;top:58.2px;font-size:5px;color:#555;-webkit-text-stroke:0.15px #555">4</div>
<div class="t" style="left:398.7px;top:56.4px;font-size:6px;color:#999;">×</div>
<div class="a" style="left:434.5px;top:54px;width:0.8px;height:10.8px;background:#c4c4c4"></div>
<div class="t cj" style="left:409.7px;top:57.55px;font-size:5px;letter-spacing:0.5px;color:#555;">新页面</div>
<div class="t" style="left:424.5px;top:58.2px;font-size:5px;color:#555;-webkit-text-stroke:0.15px #555">3</div>
<div class="t" style="left:428px;top:56.4px;font-size:6px;color:#999;">×</div>
<div class="a" style="left:466.8px;top:54px;width:0.8px;height:10.8px;background:#c4c4c4"></div>
<div class="t cj" style="left:439px;top:57.55px;font-size:5px;letter-spacing:0.5px;color:#555;">新页面</div>
<div class="t" style="left:453.8px;top:58.2px;font-size:5px;color:#555;-webkit-text-stroke:0.15px #555">2</div>
<div class="t" style="left:460.3px;top:56.4px;font-size:6px;color:#999;">×</div>
<div class="a" style="left:499.5px;top:54px;width:0.8px;height:10.8px;background:#c4c4c4"></div>
<div class="t cj" style="left:471.3px;top:57.55px;font-size:5px;letter-spacing:0.5px;color:#555;">新页面</div>
<div class="t" style="left:486.1px;top:58.2px;font-size:5px;color:#555;-webkit-text-stroke:0.15px #555">1</div>
<div class="t" style="left:493px;top:56.4px;font-size:6px;color:#999;">×</div>
<div class="a" style="left:500px;top:53.5px;width:22px;height:11.3px;background:#fff"></div>
<div class="t cj" style="left:503px;top:57.65px;font-size:5px;letter-spacing:0.4px;color:#222;">首页</div>
<div class="t" style="left:516.3px;top:56.2px;font-size:6px;color:#555;">×</div>
<div class="a" style="left:522px;top:53.6px;width:107px;height:11.2px;background:#bcbcbc"></div>
<div class="a" style="left:111px;top:64.8px;width:518px;height:6.4px;background:#fff"></div>
<div class="a" style="left:111px;top:71px;width:518px;height:0.8px;background:#dedede"></div>
<div class="a" style="left:121.22px;top:69.7px;width:0.6px;height:1.1px;background:#bdbdbd"></div>
<div class="a" style="left:125.44px;top:69.7px;width:0.6px;height:1.1px;background:#bdbdbd"></div>
<div class="a" style="left:129.66px;top:69.7px;width:0.6px;height:1.1px;background:#bdbdbd"></div>
<div class="a" style="left:133.88px;top:69.7px;width:0.6px;height:1.1px;background:#bdbdbd"></div>
<div class="a" style="left:138.1px;top:68.6px;width:0.6px;height:2.2px;background:#bdbdbd"></div>
<div class="a" style="left:142.32px;top:69.7px;width:0.6px;height:1.1px;background:#bdbdbd"></div>
<div class="a" style="left:146.54px;top:69.7px;width:0.6px;height:1.1px;background:#bdbdbd"></div>
<div class="a" style="left:150.76px;top:69.7px;width:0.6px;height:1.1px;background:#bdbdbd"></div>
<div class="a" style="left:154.98px;top:69.7px;width:0.6px;height:1.1px;background:#bdbdbd"></div>
<div class="a" style="left:159.2px;top:69.2px;width:0.6px;height:1.6px;background:#bdbdbd"></div>
<div class="a" style="left:163.42px;top:69.7px;width:0.6px;height:1.1px;background:#bdbdbd"></div>
<div class="a" style="left:167.64px;top:69.7px;width:0.6px;height:1.1px;background:#bdbdbd"></div>
<div class="a" style="left:171.86px;top:69.7px;width:0.6px;height:1.1px;background:#bdbdbd"></div>
<div class="a" style="left:176.08px;top:69.7px;width:0.6px;height:1.1px;background:#bdbdbd"></div>
<div class="a" style="left:180.3px;top:68.6px;width:0.6px;height:2.2px;background:#bdbdbd"></div>
<div class="a" style="left:184.52px;top:69.7px;width:0.6px;height:1.1px;background:#bdbdbd"></div>
<div class="a" style="left:188.74px;top:69.7px;width:0.6px;height:1.1px;background:#bdbdbd"></div>
<div class="a" style="left:192.96px;top:69.7px;width:0.6px;height:1.1px;background:#bdbdbd"></div>
<div class="a" style="left:197.18px;top:69.7px;width:0.6px;height:1.1px;background:#bdbdbd"></div>
<div class="a" style="left:201.4px;top:69.2px;width:0.6px;height:1.6px;background:#bdbdbd"></div>
<div class="a" style="left:205.62px;top:69.7px;width:0.6px;height:1.1px;background:#bdbdbd"></div>
<div class="a" style="left:209.84px;top:69.7px;width:0.6px;height:1.1px;background:#bdbdbd"></div>
<div class="a" style="left:214.06px;top:69.7px;width:0.6px;height:1.1px;background:#bdbdbd"></div>
<div class="a" style="left:218.28px;top:69.7px;width:0.6px;height:1.1px;background:#bdbdbd"></div>
<div class="a" style="left:222.5px;top:68.6px;width:0.6px;height:2.2px;background:#bdbdbd"></div>
<div class="a" style="left:226.72px;top:69.7px;width:0.6px;height:1.1px;background:#bdbdbd"></div>
<div class="a" style="left:230.94px;top:69.7px;width:0.6px;height:1.1px;background:#bdbdbd"></div>
<div class="a" style="left:235.16px;top:69.7px;width:0.6px;height:1.1px;background:#bdbdbd"></div>
<div class="a" style="left:239.38px;top:69.7px;width:0.6px;height:1.1px;background:#bdbdbd"></div>
<div class="a" style="left:243.6px;top:69.2px;width:0.6px;height:1.6px;background:#bdbdbd"></div>
<div class="a" style="left:247.82px;top:69.7px;width:0.6px;height:1.1px;background:#bdbdbd"></div>
<div class="a" style="left:252.04px;top:69.7px;width:0.6px;height:1.1px;background:#bdbdbd"></div>
<div class="a" style="left:256.26px;top:69.7px;width:0.6px;height:1.1px;background:#bdbdbd"></div>
<div class="a" style="left:260.48px;top:69.7px;width:0.6px;height:1.1px;background:#bdbdbd"></div>
<div class="a" style="left:264.7px;top:68.6px;width:0.6px;height:2.2px;background:#bdbdbd"></div>
<div class="a" style="left:268.92px;top:69.7px;width:0.6px;height:1.1px;background:#bdbdbd"></div>
<div class="a" style="left:273.14px;top:69.7px;width:0.6px;height:1.1px;background:#bdbdbd"></div>
<div class="a" style="left:277.36px;top:69.7px;width:0.6px;height:1.1px;background:#bdbdbd"></div>
<div class="a" style="left:281.58px;top:69.7px;width:0.6px;height:1.1px;background:#bdbdbd"></div>
<div class="a" style="left:285.8px;top:69.2px;width:0.6px;height:1.6px;background:#bdbdbd"></div>
<div class="a" style="left:290.02px;top:69.7px;width:0.6px;height:1.1px;background:#bdbdbd"></div>
<div class="a" style="left:294.24px;top:69.7px;width:0.6px;height:1.1px;background:#bdbdbd"></div>
<div class="a" style="left:298.46px;top:69.7px;width:0.6px;height:1.1px;background:#bdbdbd"></div>
<div class="a" style="left:302.68px;top:69.7px;width:0.6px;height:1.1px;background:#bdbdbd"></div>
<div class="a" style="left:306.9px;top:68.6px;width:0.6px;height:2.2px;background:#bdbdbd"></div>
<div class="a" style="left:311.12px;top:69.7px;width:0.6px;height:1.1px;background:#bdbdbd"></div>
<div class="a" style="left:315.34px;top:69.7px;width:0.6px;height:1.1px;background:#bdbdbd"></div>
<div class="a" style="left:319.56px;top:69.7px;width:0.6px;height:1.1px;background:#bdbdbd"></div>
<div class="a" style="left:323.78px;top:69.7px;width:0.6px;height:1.1px;background:#bdbdbd"></div>
<div class="a" style="left:328px;top:69.2px;width:0.6px;height:1.6px;background:#bdbdbd"></div>
<div class="a" style="left:332.22px;top:69.7px;width:0.6px;height:1.1px;background:#bdbdbd"></div>
<div class="a" style="left:336.44px;top:69.7px;width:0.6px;height:1.1px;background:#bdbdbd"></div>
<div class="a" style="left:340.66px;top:69.7px;width:0.6px;height:1.1px;background:#bdbdbd"></div>
<div class="a" style="left:344.88px;top:69.7px;width:0.6px;height:1.1px;background:#bdbdbd"></div>
<div class="a" style="left:349.1px;top:68.6px;width:0.6px;height:2.2px;background:#bdbdbd"></div>
<div class="a" style="left:353.32px;top:69.7px;width:0.6px;height:1.1px;background:#bdbdbd"></div>
<div class="a" style="left:357.54px;top:69.7px;width:0.6px;height:1.1px;background:#bdbdbd"></div>
<div class="a" style="left:361.76px;top:69.7px;width:0.6px;height:1.1px;background:#bdbdbd"></div>
<div class="a" style="left:365.98px;top:69.7px;width:0.6px;height:1.1px;background:#bdbdbd"></div>
<div class="a" style="left:370.2px;top:69.2px;width:0.6px;height:1.6px;background:#bdbdbd"></div>
<div class="a" style="left:374.42px;top:69.7px;width:0.6px;height:1.1px;background:#bdbdbd"></div>
<div class="a" style="left:378.64px;top:69.7px;width:0.6px;height:1.1px;background:#bdbdbd"></div>
<div class="a" style="left:382.86px;top:69.7px;width:0.6px;height:1.1px;background:#bdbdbd"></div>
<div class="a" style="left:387.08px;top:69.7px;width:0.6px;height:1.1px;background:#bdbdbd"></div>
<div class="a" style="left:391.3px;top:68.6px;width:0.6px;height:2.2px;background:#bdbdbd"></div>
<div class="a" style="left:395.52px;top:69.7px;width:0.6px;height:1.1px;background:#bdbdbd"></div>
<div class="a" style="left:399.74px;top:69.7px;width:0.6px;height:1.1px;background:#bdbdbd"></div>
<div class="a" style="left:403.96px;top:69.7px;width:0.6px;height:1.1px;background:#bdbdbd"></div>
<div class="a" style="left:408.18px;top:69.7px;width:0.6px;height:1.1px;background:#bdbdbd"></div>
<div class="a" style="left:412.4px;top:69.2px;width:0.6px;height:1.6px;background:#bdbdbd"></div>
<div class="a" style="left:416.62px;top:69.7px;width:0.6px;height:1.1px;background:#bdbdbd"></div>
<div class="a" style="left:420.84px;top:69.7px;width:0.6px;height:1.1px;background:#bdbdbd"></div>
<div class="a" style="left:425.06px;top:69.7px;width:0.6px;height:1.1px;background:#bdbdbd"></div>
<div class="a" style="left:429.28px;top:69.7px;width:0.6px;height:1.1px;background:#bdbdbd"></div>
<div class="a" style="left:433.5px;top:68.6px;width:0.6px;height:2.2px;background:#bdbdbd"></div>
<div class="a" style="left:437.72px;top:69.7px;width:0.6px;height:1.1px;background:#bdbdbd"></div>
<div class="a" style="left:441.94px;top:69.7px;width:0.6px;height:1.1px;background:#bdbdbd"></div>
<div class="a" style="left:446.16px;top:69.7px;width:0.6px;height:1.1px;background:#bdbdbd"></div>
<div class="a" style="left:450.38px;top:69.7px;width:0.6px;height:1.1px;background:#bdbdbd"></div>
<div class="a" style="left:454.6px;top:69.2px;width:0.6px;height:1.6px;background:#bdbdbd"></div>
<div class="a" style="left:458.82px;top:69.7px;width:0.6px;height:1.1px;background:#bdbdbd"></div>
<div class="a" style="left:463.04px;top:69.7px;width:0.6px;height:1.1px;background:#bdbdbd"></div>
<div class="a" style="left:467.26px;top:69.7px;width:0.6px;height:1.1px;background:#bdbdbd"></div>
<div class="a" style="left:471.48px;top:69.7px;width:0.6px;height:1.1px;background:#bdbdbd"></div>
<div class="a" style="left:475.7px;top:68.6px;width:0.6px;height:2.2px;background:#bdbdbd"></div>
<div class="a" style="left:479.92px;top:69.7px;width:0.6px;height:1.1px;background:#bdbdbd"></div>
<div class="a" style="left:484.14px;top:69.7px;width:0.6px;height:1.1px;background:#bdbdbd"></div>
<div class="a" style="left:488.36px;top:69.7px;width:0.6px;height:1.1px;background:#bdbdbd"></div>
<div class="a" style="left:492.58px;top:69.7px;width:0.6px;height:1.1px;background:#bdbdbd"></div>
<div class="a" style="left:496.8px;top:69.2px;width:0.6px;height:1.6px;background:#bdbdbd"></div>
<div class="a" style="left:501.02px;top:69.7px;width:0.6px;height:1.1px;background:#bdbdbd"></div>
<div class="a" style="left:505.24px;top:69.7px;width:0.6px;height:1.1px;background:#bdbdbd"></div>
<div class="a" style="left:509.46px;top:69.7px;width:0.6px;height:1.1px;background:#bdbdbd"></div>
<div class="a" style="left:513.68px;top:69.7px;width:0.6px;height:1.1px;background:#bdbdbd"></div>
<div class="a" style="left:517.9px;top:68.6px;width:0.6px;height:2.2px;background:#bdbdbd"></div>
<div class="a" style="left:522.12px;top:69.7px;width:0.6px;height:1.1px;background:#bdbdbd"></div>
<div class="a" style="left:526.34px;top:69.7px;width:0.6px;height:1.1px;background:#bdbdbd"></div>
<div class="a" style="left:530.56px;top:69.7px;width:0.6px;height:1.1px;background:#bdbdbd"></div>
<div class="a" style="left:534.78px;top:69.7px;width:0.6px;height:1.1px;background:#bdbdbd"></div>
<div class="a" style="left:539px;top:69.2px;width:0.6px;height:1.6px;background:#bdbdbd"></div>
<div class="a" style="left:543.22px;top:69.7px;width:0.6px;height:1.1px;background:#bdbdbd"></div>
<div class="a" style="left:547.44px;top:69.7px;width:0.6px;height:1.1px;background:#bdbdbd"></div>
<div class="a" style="left:551.66px;top:69.7px;width:0.6px;height:1.1px;background:#bdbdbd"></div>
<div class="a" style="left:555.88px;top:69.7px;width:0.6px;height:1.1px;background:#bdbdbd"></div>
<div class="a" style="left:560.1px;top:68.6px;width:0.6px;height:2.2px;background:#bdbdbd"></div>
<div class="a" style="left:564.32px;top:69.7px;width:0.6px;height:1.1px;background:#bdbdbd"></div>
<div class="a" style="left:568.54px;top:69.7px;width:0.6px;height:1.1px;background:#bdbdbd"></div>
<div class="a" style="left:572.76px;top:69.7px;width:0.6px;height:1.1px;background:#bdbdbd"></div>
<div class="a" style="left:576.98px;top:69.7px;width:0.6px;height:1.1px;background:#bdbdbd"></div>
<div class="a" style="left:581.2px;top:69.2px;width:0.6px;height:1.6px;background:#bdbdbd"></div>
<div class="a" style="left:585.42px;top:69.7px;width:0.6px;height:1.1px;background:#bdbdbd"></div>
<div class="a" style="left:589.64px;top:69.7px;width:0.6px;height:1.1px;background:#bdbdbd"></div>
<div class="a" style="left:593.86px;top:69.7px;width:0.6px;height:1.1px;background:#bdbdbd"></div>
<div class="a" style="left:598.08px;top:69.7px;width:0.6px;height:1.1px;background:#bdbdbd"></div>
<div class="a" style="left:602.3px;top:68.6px;width:0.6px;height:2.2px;background:#bdbdbd"></div>
<div class="a" style="left:606.52px;top:69.7px;width:0.6px;height:1.1px;background:#bdbdbd"></div>
<div class="a" style="left:610.74px;top:69.7px;width:0.6px;height:1.1px;background:#bdbdbd"></div>
<div class="a" style="left:614.96px;top:69.7px;width:0.6px;height:1.1px;background:#bdbdbd"></div>
<div class="a" style="left:619.18px;top:69.7px;width:0.6px;height:1.1px;background:#bdbdbd"></div>
<div class="a" style="left:623.4px;top:69.2px;width:0.6px;height:1.6px;background:#bdbdbd"></div>
<div class="a" style="left:627.62px;top:69.7px;width:0.6px;height:1.1px;background:#bdbdbd"></div>
<div class="t" style="left:159.7px;top:64.9px;font-size:5px;color:#444;letter-spacing:-0.5px;-webkit-text-stroke:0.1px #444">2200</div>
<div class="t" style="left:201.9px;top:64.9px;font-size:5px;color:#444;letter-spacing:-0.5px;-webkit-text-stroke:0.1px #444">2400</div>
<div class="t" style="left:244.1px;top:64.9px;font-size:5px;color:#444;letter-spacing:-0.5px;-webkit-text-stroke:0.1px #444">2600</div>
<div class="t" style="left:286.3px;top:64.9px;font-size:5px;color:#444;letter-spacing:-0.5px;-webkit-text-stroke:0.1px #444">2800</div>
<div class="t" style="left:328.5px;top:64.9px;font-size:5px;color:#444;letter-spacing:-0.5px;-webkit-text-stroke:0.1px #444">3000</div>
<div class="t" style="left:370.7px;top:64.9px;font-size:5px;color:#444;letter-spacing:-0.5px;-webkit-text-stroke:0.1px #444">3200</div>
<div class="t" style="left:412.9px;top:64.9px;font-size:5px;color:#444;letter-spacing:-0.5px;-webkit-text-stroke:0.1px #444">3400</div>
<div class="t" style="left:455.1px;top:64.9px;font-size:5px;color:#444;letter-spacing:-0.5px;-webkit-text-stroke:0.1px #444">3600</div>
<div class="t" style="left:497.3px;top:64.9px;font-size:5px;color:#444;letter-spacing:-0.5px;-webkit-text-stroke:0.1px #444">3800</div>
<div class="t" style="left:539.5px;top:64.9px;font-size:5px;color:#444;letter-spacing:-0.5px;-webkit-text-stroke:0.1px #444">4000</div>
<div class="t" style="left:581.7px;top:64.9px;font-size:5px;color:#444;letter-spacing:-0.5px;-webkit-text-stroke:0.1px #444">4200</div>
<div class="t" style="left:623.9px;top:64.9px;font-size:5px;color:#444;letter-spacing:-0.5px;-webkit-text-stroke:0.1px #444">4400</div>
<div class="a" style="left:111px;top:64.8px;width:6.2px;height:335.2px;background:#fff"></div>
<div class="a" style="left:117px;top:71.8px;width:0.6px;height:328.2px;background:#e4e4e4"></div>
<div class="a" style="left:115.9px;top:72.55px;width:1.1px;height:0.6px;background:#cfcfcf"></div>
<div class="a" style="left:115.9px;top:76.79px;width:1.1px;height:0.6px;background:#cfcfcf"></div>
<div class="a" style="left:115.9px;top:81.03px;width:1.1px;height:0.6px;background:#cfcfcf"></div>
<div class="a" style="left:115.9px;top:85.28px;width:1.1px;height:0.6px;background:#cfcfcf"></div>
<div class="a" style="left:115.4px;top:89.53px;width:1.6px;height:0.6px;background:#cfcfcf"></div>
<div class="a" style="left:115.9px;top:93.77px;width:1.1px;height:0.6px;background:#cfcfcf"></div>
<div class="a" style="left:115.9px;top:98.02px;width:1.1px;height:0.6px;background:#cfcfcf"></div>
<div class="a" style="left:115.9px;top:102.26px;width:1.1px;height:0.6px;background:#cfcfcf"></div>
<div class="a" style="left:115.9px;top:106.5px;width:1.1px;height:0.6px;background:#cfcfcf"></div>
<div class="a" style="left:114.8px;top:110.75px;width:2.2px;height:0.6px;background:#cfcfcf"></div>
<div class="a" style="left:115.9px;top:115px;width:1.1px;height:0.6px;background:#cfcfcf"></div>
<div class="a" style="left:115.9px;top:119.24px;width:1.1px;height:0.6px;background:#cfcfcf"></div>
<div class="a" style="left:115.9px;top:123.48px;width:1.1px;height:0.6px;background:#cfcfcf"></div>
<div class="a" style="left:115.9px;top:127.73px;width:1.1px;height:0.6px;background:#cfcfcf"></div>
<div class="a" style="left:115.4px;top:131.97px;width:1.6px;height:0.6px;background:#cfcfcf"></div>
<div class="a" style="left:115.9px;top:136.22px;width:1.1px;height:0.6px;background:#cfcfcf"></div>
<div class="a" style="left:115.9px;top:140.47px;width:1.1px;height:0.6px;background:#cfcfcf"></div>
<div class="a" style="left:115.9px;top:144.71px;width:1.1px;height:0.6px;background:#cfcfcf"></div>
<div class="a" style="left:115.9px;top:148.95px;width:1.1px;height:0.6px;background:#cfcfcf"></div>
<div class="a" style="left:114.8px;top:153.2px;width:2.2px;height:0.6px;background:#cfcfcf"></div>
<div class="a" style="left:115.9px;top:157.44px;width:1.1px;height:0.6px;background:#cfcfcf"></div>
<div class="a" style="left:115.9px;top:161.69px;width:1.1px;height:0.6px;background:#cfcfcf"></div>
<div class="a" style="left:115.9px;top:165.94px;width:1.1px;height:0.6px;background:#cfcfcf"></div>
<div class="a" style="left:115.9px;top:170.18px;width:1.1px;height:0.6px;background:#cfcfcf"></div>
<div class="a" style="left:115.4px;top:174.42px;width:1.6px;height:0.6px;background:#cfcfcf"></div>
<div class="a" style="left:115.9px;top:178.67px;width:1.1px;height:0.6px;background:#cfcfcf"></div>
<div class="a" style="left:115.9px;top:182.91px;width:1.1px;height:0.6px;background:#cfcfcf"></div>
<div class="a" style="left:115.9px;top:187.16px;width:1.1px;height:0.6px;background:#cfcfcf"></div>
<div class="a" style="left:115.9px;top:191.4px;width:1.1px;height:0.6px;background:#cfcfcf"></div>
<div class="a" style="left:114.8px;top:195.65px;width:2.2px;height:0.6px;background:#cfcfcf"></div>
<div class="a" style="left:115.9px;top:199.9px;width:1.1px;height:0.6px;background:#cfcfcf"></div>
<div class="a" style="left:115.9px;top:204.14px;width:1.1px;height:0.6px;background:#cfcfcf"></div>
<div class="a" style="left:115.9px;top:208.38px;width:1.1px;height:0.6px;background:#cfcfcf"></div>
<div class="a" style="left:115.9px;top:212.63px;width:1.1px;height:0.6px;background:#cfcfcf"></div>
<div class="a" style="left:115.4px;top:216.88px;width:1.6px;height:0.6px;background:#cfcfcf"></div>
<div class="a" style="left:115.9px;top:221.12px;width:1.1px;height:0.6px;background:#cfcfcf"></div>
<div class="a" style="left:115.9px;top:225.37px;width:1.1px;height:0.6px;background:#cfcfcf"></div>
<div class="a" style="left:115.9px;top:229.61px;width:1.1px;height:0.6px;background:#cfcfcf"></div>
<div class="a" style="left:115.9px;top:233.86px;width:1.1px;height:0.6px;background:#cfcfcf"></div>
<div class="a" style="left:114.8px;top:238.1px;width:2.2px;height:0.6px;background:#cfcfcf"></div>
<div class="a" style="left:115.9px;top:242.35px;width:1.1px;height:0.6px;background:#cfcfcf"></div>
<div class="a" style="left:115.9px;top:246.59px;width:1.1px;height:0.6px;background:#cfcfcf"></div>
<div class="a" style="left:115.9px;top:250.84px;width:1.1px;height:0.6px;background:#cfcfcf"></div>
<div class="a" style="left:115.9px;top:255.08px;width:1.1px;height:0.6px;background:#cfcfcf"></div>
<div class="a" style="left:115.4px;top:259.33px;width:1.6px;height:0.6px;background:#cfcfcf"></div>
<div class="a" style="left:115.9px;top:263.57px;width:1.1px;height:0.6px;background:#cfcfcf"></div>
<div class="a" style="left:115.9px;top:267.81px;width:1.1px;height:0.6px;background:#cfcfcf"></div>
<div class="a" style="left:115.9px;top:272.06px;width:1.1px;height:0.6px;background:#cfcfcf"></div>
<div class="a" style="left:115.9px;top:276.31px;width:1.1px;height:0.6px;background:#cfcfcf"></div>
<div class="a" style="left:114.8px;top:280.55px;width:2.2px;height:0.6px;background:#cfcfcf"></div>
<div class="a" style="left:115.9px;top:284.8px;width:1.1px;height:0.6px;background:#cfcfcf"></div>
<div class="a" style="left:115.9px;top:289.04px;width:1.1px;height:0.6px;background:#cfcfcf"></div>
<div class="a" style="left:115.9px;top:293.29px;width:1.1px;height:0.6px;background:#cfcfcf"></div>
<div class="a" style="left:115.9px;top:297.53px;width:1.1px;height:0.6px;background:#cfcfcf"></div>
<div class="a" style="left:115.4px;top:301.78px;width:1.6px;height:0.6px;background:#cfcfcf"></div>
<div class="a" style="left:115.9px;top:306.02px;width:1.1px;height:0.6px;background:#cfcfcf"></div>
<div class="a" style="left:115.9px;top:310.26px;width:1.1px;height:0.6px;background:#cfcfcf"></div>
<div class="a" style="left:115.9px;top:314.51px;width:1.1px;height:0.6px;background:#cfcfcf"></div>
<div class="a" style="left:115.9px;top:318.75px;width:1.1px;height:0.6px;background:#cfcfcf"></div>
<div class="a" style="left:114.8px;top:323px;width:2.2px;height:0.6px;background:#cfcfcf"></div>
<div class="a" style="left:115.9px;top:327.25px;width:1.1px;height:0.6px;background:#cfcfcf"></div>
<div class="a" style="left:115.9px;top:331.49px;width:1.1px;height:0.6px;background:#cfcfcf"></div>
<div class="a" style="left:115.9px;top:335.74px;width:1.1px;height:0.6px;background:#cfcfcf"></div>
<div class="a" style="left:115.9px;top:339.98px;width:1.1px;height:0.6px;background:#cfcfcf"></div>
<div class="a" style="left:115.4px;top:344.23px;width:1.6px;height:0.6px;background:#cfcfcf"></div>
<div class="a" style="left:115.9px;top:348.47px;width:1.1px;height:0.6px;background:#cfcfcf"></div>
<div class="a" style="left:115.9px;top:352.71px;width:1.1px;height:0.6px;background:#cfcfcf"></div>
<div class="a" style="left:115.9px;top:356.96px;width:1.1px;height:0.6px;background:#cfcfcf"></div>
<div class="a" style="left:115.9px;top:361.2px;width:1.1px;height:0.6px;background:#cfcfcf"></div>
<div class="a" style="left:114.8px;top:365.45px;width:2.2px;height:0.6px;background:#cfcfcf"></div>
<div class="a" style="left:115.9px;top:369.7px;width:1.1px;height:0.6px;background:#cfcfcf"></div>
<div class="a" style="left:115.9px;top:373.94px;width:1.1px;height:0.6px;background:#cfcfcf"></div>
<div class="a" style="left:115.9px;top:378.19px;width:1.1px;height:0.6px;background:#cfcfcf"></div>
<div class="a" style="left:115.9px;top:382.43px;width:1.1px;height:0.6px;background:#cfcfcf"></div>
<div class="a" style="left:115.4px;top:386.68px;width:1.6px;height:0.6px;background:#cfcfcf"></div>
<div class="a" style="left:115.9px;top:390.92px;width:1.1px;height:0.6px;background:#cfcfcf"></div>
<div class="a" style="left:115.9px;top:395.17px;width:1.1px;height:0.6px;background:#cfcfcf"></div>
<div class="a" style="left:115.9px;top:399.41px;width:1.1px;height:0.6px;background:#cfcfcf"></div>
<div class="t" style="left:112.2px;top:114.85px;font-size:4px;letter-spacing:-0.1px;color:#333;-webkit-text-stroke:0.2px #333;transform:rotate(-90deg);transform-origin:0 0">400</div>
<div class="t" style="left:112.2px;top:157.30px;font-size:4px;letter-spacing:-0.1px;color:#333;-webkit-text-stroke:0.2px #333;transform:rotate(-90deg);transform-origin:0 0">600</div>
<div class="t" style="left:112.2px;top:199.75px;font-size:4px;letter-spacing:-0.1px;color:#333;-webkit-text-stroke:0.2px #333;transform:rotate(-90deg);transform-origin:0 0">800</div>
<div class="t" style="left:112.2px;top:243.30px;font-size:4px;letter-spacing:-0.1px;color:#333;-webkit-text-stroke:0.2px #333;transform:rotate(-90deg);transform-origin:0 0">1000</div>
<div class="t" style="left:112.2px;top:285.75px;font-size:4px;letter-spacing:-0.1px;color:#333;-webkit-text-stroke:0.2px #333;transform:rotate(-90deg);transform-origin:0 0">1200</div>
<div class="t" style="left:112.2px;top:328.20px;font-size:4px;letter-spacing:-0.1px;color:#333;-webkit-text-stroke:0.2px #333;transform:rotate(-90deg);transform-origin:0 0">1400</div>
<div class="t" style="left:112.2px;top:370.65px;font-size:4px;letter-spacing:-0.1px;color:#333;-webkit-text-stroke:0.2px #333;transform:rotate(-90deg);transform-origin:0 0">1600</div>
<div class="a" style="left:117.8px;top:71.8px;width:511.2px;height:328.2px;background:#6096cd"></div>
<div class="a" style="left:117.8px;top:71.8px;width:100.7px;height:309.7px;background:#fff"></div>
<div class="a" style="left:117.8px;top:71.8px;width:100.7px;height:2.4px;background:#e4e4e4"></div>
<div class="t" style="left:117.5px;top:80.7px;font-size:6px;color:#3a3a3a;font-family:'Liberation Serif',serif;font-weight:bold">xxxxxxxxxxx</div>
<div class="t" style="left:117.5px;top:148.7px;font-size:6px;color:#3a3a3a;font-family:'Liberation Serif',serif;font-weight:bold">xxxxxxxxxxx</div>
<div class="a" style="left:117.8px;top:90.8px;width:99.5px;height:48px;background:#f5f5f5"></div>
<div class="a" style="left:117.8px;top:138.8px;width:99.5px;height:2.6px;background:#efefef"></div>
<div class="a" style="left:117.8px;top:158.8px;width:99.5px;height:145.2px;background:#f5f5f5"></div>
<div class="a" style="left:117.8px;top:304px;width:99.5px;height:23.8px;background:#f2f2f2"></div>
<div class="a" style="left:124px;top:206.2px;width:88px;height:0.6px;background:#cfcfcf"></div>
<div class="a" style="left:118px;top:253.4px;width:94px;height:0.6px;background:#dcdcdc"></div>
<div class="t" style="left:124px;top:97px;font-size:6px;color:#4a4a4a;font-family:'Liberation Serif',serif;font-weight:bold">xxxxxxxxxxxxxxxxxxxxxxxxxxxxxx</div>
<div class="t" style="left:124px;top:104.6px;font-size:6px;color:#4a4a4a;font-family:'Liberation Serif',serif;font-weight:bold">xxxxxxxxxxxxxxxxxxxxxxxxxxxxxx</div>
<div class="t" style="left:124.6px;top:126.5px;font-size:8px;color:#444;font-family:'Liberation Serif',serif;font-weight:bold">¥</div>
<div class="t" style="left:129.8px;top:126.5px;font-size:8px;color:#444;font-family:'Liberation Serif',serif;letter-spacing:-0.45px;-webkit-text-stroke:0.3px #444">123.00</div>
<div class="a" style="left:117.8px;top:96px;width:2px;height:38px;border-right:0.7px solid #c9c9c9;border-top:0.7px solid #c9c9c9;border-bottom:0.7px solid #c9c9c9"></div>
<div class="t" style="left:124px;top:164.6px;font-size:6px;color:#4a4a4a;font-family:'Liberation Serif',serif;font-weight:bold">xxxxxxxxxxxxxxxxxxxxxxxxxxxxxx</div>
<div class="t" style="left:124px;top:172.2px;font-size:6px;color:#4a4a4a;font-family:'Liberation Serif',serif;font-weight:bold">xxxxxxxxxxxxxxxxxxxxxxxxxxxxxx</div>
<div class="t" style="left:124.6px;top:194.9px;font-size:8px;color:#444;font-family:'Liberation Serif',serif;font-weight:bold">¥</div>
<div class="t" style="left:129.8px;top:194.9px;font-size:8px;color:#444;font-family:'Liberation Serif',serif;letter-spacing:-0.45px;-webkit-text-stroke:0.3px #444">123.00</div>
<div class="a" style="left:117.8px;top:164px;width:2px;height:38px;border-right:0.7px solid #c9c9c9;border-top:0.7px solid #c9c9c9;border-bottom:0.7px solid #c9c9c9"></div>
<div class="t" style="left:124px;top:211.6px;font-size:6px;color:#4a4a4a;font-family:'Liberation Serif',serif;font-weight:bold">xxxxxxxxxxxxxxxxxxxxxxxxxxxxxx</div>
<div class="t" style="left:124px;top:219.2px;font-size:6px;color:#4a4a4a;font-family:'Liberation Serif',serif;font-weight:bold">xxxxxxxxxxxxxxxxxxxxxxxxxxxxxx</div>
<div class="t" style="left:124.6px;top:240.9px;font-size:8px;color:#444;font-family:'Liberation Serif',serif;font-weight:bold">¥</div>
<div class="t" style="left:129.8px;top:240.9px;font-size:8px;color:#444;font-family:'Liberation Serif',serif;letter-spacing:-0.45px;-webkit-text-stroke:0.3px #444">123.00</div>
<div class="a" style="left:117.8px;top:210px;width:2px;height:39px;border-right:0.7px solid #c9c9c9;border-top:0.7px solid #c9c9c9;border-bottom:0.7px solid #c9c9c9"></div>
<div class="t" style="left:124px;top:259px;font-size:6px;color:#4a4a4a;font-family:'Liberation Serif',serif;font-weight:bold">xxxxxxxxxxxxxxxxxxxxxxxxxxxxxx</div>
<div class="t" style="left:124px;top:266.6px;font-size:6px;color:#4a4a4a;font-family:'Liberation Serif',serif;font-weight:bold">xxxxxxxxxxxxxxxxxxxxxxxxxxxxxx</div>
<div class="t" style="left:124.6px;top:288.5px;font-size:8px;color:#444;font-family:'Liberation Serif',serif;font-weight:bold">¥</div>
<div class="t" style="left:129.8px;top:288.5px;font-size:8px;color:#444;font-family:'Liberation Serif',serif;letter-spacing:-0.45px;-webkit-text-stroke:0.3px #444">123.00</div>
<div class="a" style="left:117.8px;top:257px;width:2px;height:40px;border-right:0.7px solid #c9c9c9;border-top:0.7px solid #c9c9c9;border-bottom:0.7px solid #c9c9c9"></div>
<div class="a" style="left:117.8px;top:327.8px;width:63.5px;height:18.6px;background:#e6e6e6"></div>
<div class="t" style="left:143.6px;top:333.2px;font-size:7px;color:#2a2a2a;font-weight:bold;letter-spacing:-0.45px;-webkit-text-stroke:0.25px #2a2a2a">Heading 1</div>
<div class="a" style="left:181.3px;top:327.8px;width:37.2px;height:18.6px;background:#c9c9c9"></div>
<div class="t cj" style="left:193px;top:333px;font-size:9px;letter-spacing:0px;color:#222;">结算</div>
<div class="a" style="left:117.8px;top:346.4px;width:100.7px;height:35.1px;background:#fff"></div>
<div class="ph" style="left:116.5px;top:349.5px;width:9px;height:11.4px"></div>
<div class="ph" style="left:153px;top:349.5px;width:11.5px;height:11.4px"></div>
<div class="ph" style="left:192.8px;top:349.5px;width:11.3px;height:11.4px"></div>
<div class="t cj" style="left:118px;top:361.5px;font-size:5px;letter-spacing:-0.25px;color:#444;">关注</div>
<div class="t cj" style="left:152.2px;top:360.5px;font-size:6px;letter-spacing:-0.33px;color:#444;">购物车</div>
<div class="t cj" style="left:194.2px;top:360.5px;font-size:6px;letter-spacing:-0.2px;color:#444;">我的</div>
<div class="a" style="left:235px;top:71.8px;width:158.3px;height:309.7px;background:#fff"></div>
<div class="a" style="left:235px;top:71.8px;width:158.3px;height:66.2px;background:#d9d9d9"></div>
<div class="a" style="left:295.7px;top:84px;width:37.6px;height:37.6px;border-radius:50%;background:#fff;box-shadow:0 0 0 0.5px #cfcfcf"></div>
<div class="t cj" style="left:307.7px;top:122.3px;font-size:8px;letter-spacing:0.4px;color:#333;">昵称</div>
<div class="t cj" style="left:255.2px;top:147.05px;font-size:7px;letter-spacing:1.2px;color:#444;">卡券</div>
<div class="t cj" style="left:307.9px;top:147.05px;font-size:7px;letter-spacing:0.05px;color:#333;">收藏</div>
<div class="a" style="left:319.6px;top:146.5px;width:5.5px;height:7.5px;border:0.8px solid #666;border-radius:50%;background:#fff"></div>
<div class="a" style="left:317.8px;top:149.9px;width:9px;height:0.8px;background:#555"></div>
<div class="a" style="left:321.9px;top:145px;width:0.8px;height:10.4px;background:#555"></div>
<div class="t cj" style="left:360.5px;top:147.05px;font-size:7px;letter-spacing:1.25px;color:#444;">足迹</div>
<div class="a" style="left:235px;top:159px;width:158.3px;height:4px;background:#efefef"></div>
<div class="t cj" style="left:242.6px;top:168.25px;font-size:8px;letter-spacing:-0.15px;color:#333;">我的订单</div>
<div class="ph" style="left:244.1px;top:179.7px;width:13.5px;height:13.5px"></div>
<div class="t cj" style="left:245.4px;top:195.55px;font-size:5px;letter-spacing:0.47px;color:#444;">待付款</div>
<div class="ph" style="left:276px;top:179.7px;width:13.5px;height:13.5px"></div>
<div class="t cj" style="left:274.8px;top:194.55px;font-size:6px;letter-spacing:-0.1px;color:#444;">待发货</div>
<div class="ph" style="left:307.8px;top:179.7px;width:13.5px;height:13.5px"></div>
<div class="t cj" style="left:306.6px;top:194.55px;font-size:6px;letter-spacing:-0.1px;color:#444;">待收货</div>
<div class="ph" style="left:339.7px;top:179.7px;width:13.5px;height:13.5px"></div>
<div class="t cj" style="left:338.5px;top:195.55px;font-size:5px;letter-spacing:0.5px;color:#444;">待评价</div>
<div class="ph" style="left:371.6px;top:179.7px;width:13.5px;height:13.5px"></div>
<div class="t cj" style="left:371.6px;top:195.55px;font-size:5px;letter-spacing:0.47px;color:#444;">退换货</div>
<div class="a" style="left:235px;top:203px;width:158.3px;height:4px;background:#efefef"></div>
<div class="t cj" style="left:243px;top:213px;font-size:7px;letter-spacing:0.75px;color:#333;">个人中心</div>
<div class="t cj" style="left:243px;top:232px;font-size:7px;letter-spacing:0.75px;color:#333;">优惠活动</div>
<div class="t cj" style="left:243px;top:250.6px;font-size:7px;letter-spacing:0.75px;color:#333;">好友推荐</div>
<div class="a" style="left:237px;top:225px;width:154.3px;height:0.6px;background:#efefef"></div>
<div class="a" style="left:237px;top:244px;width:154.3px;height:0.6px;background:#efefef"></div>
<div class="a" style="left:235px;top:263.2px;width:158.3px;height:4.2px;background:#efefef"></div>
<div class="t cj" style="left:244px;top:273.95px;font-size:8px;letter-spacing:-0.25px;color:#333;">系统设置</div>
<div class="t cj" style="left:244px;top:292.95px;font-size:8px;letter-spacing:-0.25px;color:#333;">检查更新</div>
<div class="a" style="left:237px;top:286px;width:154.3px;height:0.6px;background:#efefef"></div>
<div class="a" style="left:235px;top:305px;width:158.3px;height:41.5px;background:#f0f0f0"></div>
<div class="a" style="left:235px;top:346.5px;width:158.3px;height:35px;background:#fff"></div>
<div class="ph" style="left:249.5px;top:349.6px;width:10.5px;height:10.7px"></div>
<div class="ph" style="left:289px;top:349.6px;width:10.5px;height:10.7px"></div>
<div class="ph" style="left:328.8px;top:349.6px;width:10.5px;height:10.7px"></div>
<div class="ph" style="left:368.4px;top:349.6px;width:10.5px;height:10.7px"></div>
<div class="t cj" style="left:249.5px;top:360.4px;font-size:7px;letter-spacing:-0.25px;color:#555;">首页</div>
<div class="t cj" style="left:289px;top:360.4px;font-size:7px;letter-spacing:0.35px;color:#555;">关注</div>
<div class="t cj" style="left:327px;top:360.4px;font-size:7px;letter-spacing:-0.6px;color:#555;">购物车</div>
<div class="t cj" style="left:368.9px;top:360.4px;font-size:7px;letter-spacing:0.35px;color:#555;">我的</div>
<div class="a" style="left:426.1px;top:71.8px;width:158.9px;height:310.2px;background:#f1f1f1"></div>
<div class="a" style="left:426.1px;top:71.8px;width:158.9px;height:66px;background:#d9d9d9"></div>
<div class="a" style="left:486.5px;top:84.5px;width:38.2px;height:38.2px;border-radius:50%;background:#fff;box-shadow:0 0 0 0.5px #cfcfcf"></div>
<div class="t cj" style="left:499.2px;top:125.35px;font-size:8px;letter-spacing:0.4px;color:#444;">昵称</div>
<div class="a" style="left:426.1px;top:347px;width:158.9px;height:35px;background:#fff"></div>
<div class="ph" style="left:442.7px;top:351.2px;width:10.8px;height:11.4px"></div>
<div class="ph" style="left:482px;top:351.2px;width:10.8px;height:11.4px"></div>
<div class="ph" style="left:518px;top:351.2px;width:10.8px;height:11.4px"></div>
<div class="ph" style="left:555px;top:351.2px;width:10.8px;height:11.4px"></div>
<div class="t cj" style="left:442.7px;top:362.1px;font-size:7px;letter-spacing:0.4px;color:#555;">首页</div>
<div class="t cj" style="left:483.3px;top:362.1px;font-size:7px;letter-spacing:-0.2px;color:#555;">关注</div>
<div class="t cj" style="left:516.7px;top:362.1px;font-size:7px;letter-spacing:-0.47px;color:#555;">购物车</div>
<div class="t cj" style="left:556.6px;top:362.1px;font-size:7px;letter-spacing:-0.3px;color:#555;">我的</div>
<div class="a" style="left:117.8px;top:398.2px;width:101px;height:2px;background:#dcdcdc"></div>
<div class="a" style="left:235px;top:398.2px;width:158.5px;height:2px;background:#d9d9d9"></div>
</body></html>
